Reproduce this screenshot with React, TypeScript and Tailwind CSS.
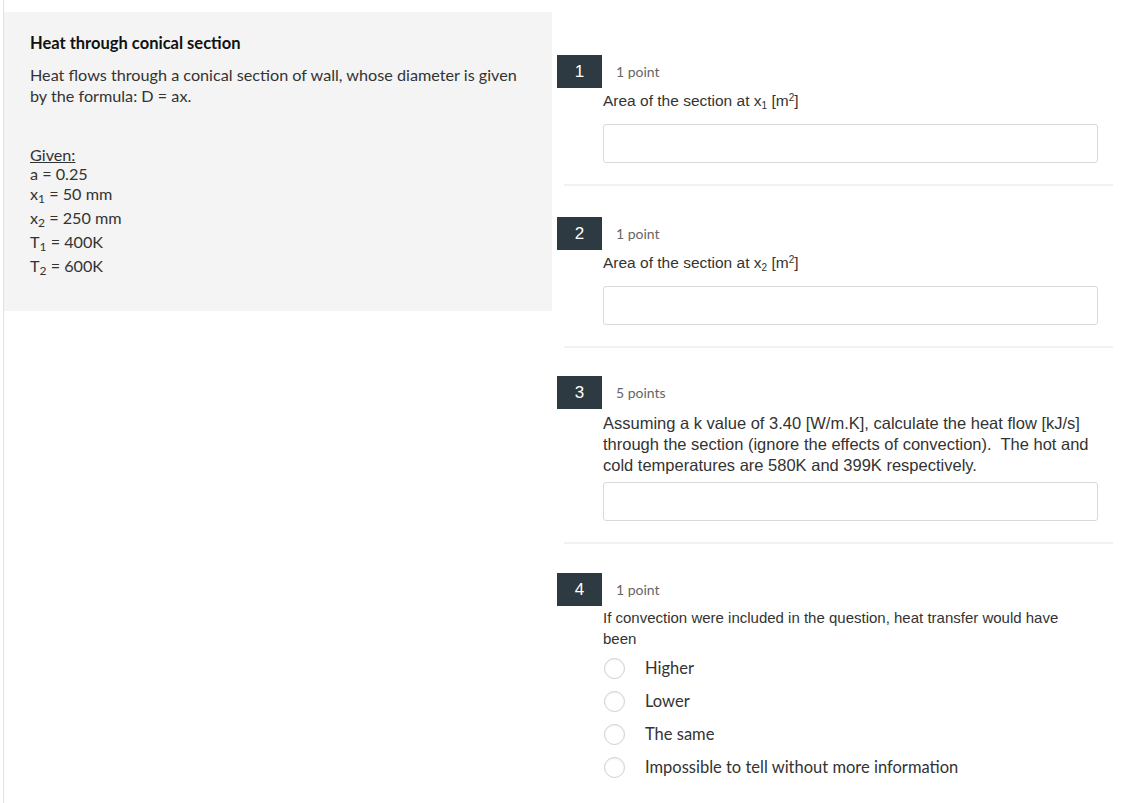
const lato = "font-['Lato','Noto_Sans',sans-serif]";
const arial = "font-['Liberation_Sans','Arial',sans-serif]";

function Header({ n, points }: { n: number; points: string }) {
  return (
    <div className="flex items-center">
      <div className={`${arial} ml-[5px] flex h-[33px] w-[45px] items-center justify-center bg-[#2d3a42] text-[17px] text-white`}>
        {n}
      </div>
      <span className={`${lato} ml-[14px] text-[14px] text-[#666]`}>{points}</span>
    </div>
  );
}

function Answer({ className }: { className: string }) {
  return <div className={`ml-[51px] h-[39px] w-[495px] rounded-[3px] border border-[#d9d9d9] bg-white ${className}`} />;
}

function Divider({ className }: { className: string }) {
  return <div className={`ml-[12px] h-[2px] w-[549px] bg-[#f2f2f2] ${className}`} />;
}

function Option({ label }: { label: string }) {
  return (
    <div className="flex h-[33px] items-center pl-[52px]">
      <span className="h-[21px] w-[21px] rounded-full border border-[#cfcfcf] bg-white shadow-[inset_0_1px_2px_rgba(0,0,0,0.06)]" />
      <span className={`${lato} ml-[20px] text-[16.5px] text-[#333]`}>{label}</span>
    </div>
  );
}

export default function App() {
  return (
    <div className="min-h-[803px] bg-white">
      <div className="ml-[3px] flex min-h-[803px] border-l border-[#e2e2e2]">
        <div className="w-[548px] shrink-0 pt-[12px]">
          <div className={`${lato} h-[299px] bg-[#f4f4f4] pl-[26px] pt-[21px] text-[16.2px] text-[#333]`}>
            <h1 className="text-[16.5px] font-bold leading-[21px] text-[#111]">Heat through conical section</h1>
            <p className="mt-[10px] leading-[21px]">
              Heat flows through a conical section of wall, whose diameter is given
              <br />
              by the formula: D = ax.
            </p>
            <div className="mt-[40px]">
              <div className="h-[18px] leading-[18px] underline">Given:</div>
              <div className="h-[20px] leading-[20px]">a = 0.25</div>
              <div className="h-[22px] leading-[20px]">
                x<sub className="text-[12px]">1</sub> = 50 mm
              </div>
              <div className="h-[24px] leading-[24px]">
                x<sub className="text-[12px]">2</sub> = 250 mm
              </div>
              <div className="h-[24px] leading-[24px]">
                T<sub className="text-[12px]">1</sub> = 400K
              </div>
              <div className="h-[24px] leading-[24px]">
                T<sub className="text-[12px]">2</sub> = 600K
              </div>
            </div>
          </div>
        </div>

        <div className="flex-1 pt-[55px]">
          <Header n={1} points="1 point" />
          <p className={`${arial} ml-[51px] mt-[3px] text-[15.5px] leading-[20px] text-[#333]`}>
            Area of the section at x<sub className="text-[10px]">1</sub> [m<sup className="text-[10px]">2</sup>]
          </p>
          <Answer className="mt-[13px]" />
          <Divider className="mt-[21px]" />

          <div className="mt-[31px]">
            <Header n={2} points="1 point" />
          </div>
          <p className={`${arial} ml-[51px] mt-[3px] text-[15.5px] leading-[20px] text-[#333]`}>
            Area of the section at x<sub className="text-[10px]">2</sub> [m<sup className="text-[10px]">2</sup>]
          </p>
          <Answer className="mt-[13px]" />
          <Divider className="mt-[21px]" />

          <div className="mt-[28px]">
            <Header n={3} points="5 points" />
          </div>
          <p className={`${arial} ml-[51px] mt-[4px] w-[510px] text-[16.5px] leading-[21px] text-[#333]`}>
            Assuming a k value of 3.40 [W/m.K], calculate the heat flow [kJ/s]
            <br />
            through the section (ignore the effects of convection).&nbsp; The hot and
            <br />
            cold temperatures are 580K and 399K respectively.
          </p>
          <Answer className="mt-[6px]" />
          <Divider className="mt-[21px]" />

          <div className="mt-[29px]">
            <Header n={4} points="1 point" />
          </div>
          <p className={`${arial} ml-[51px] mt-[1px] text-[15px] leading-[21px] text-[#333]`}>
            If convection were included in the question, heat transfer would have
            <br />
            been
          </p>
          <div className="mt-[3px]">
            <Option label="Higher" />
            <Option label="Lower" />
            <Option label="The same" />
            <Option label="Impossible to tell without more information" />
          </div>
        </div>
      </div>
    </div>
  );
}
